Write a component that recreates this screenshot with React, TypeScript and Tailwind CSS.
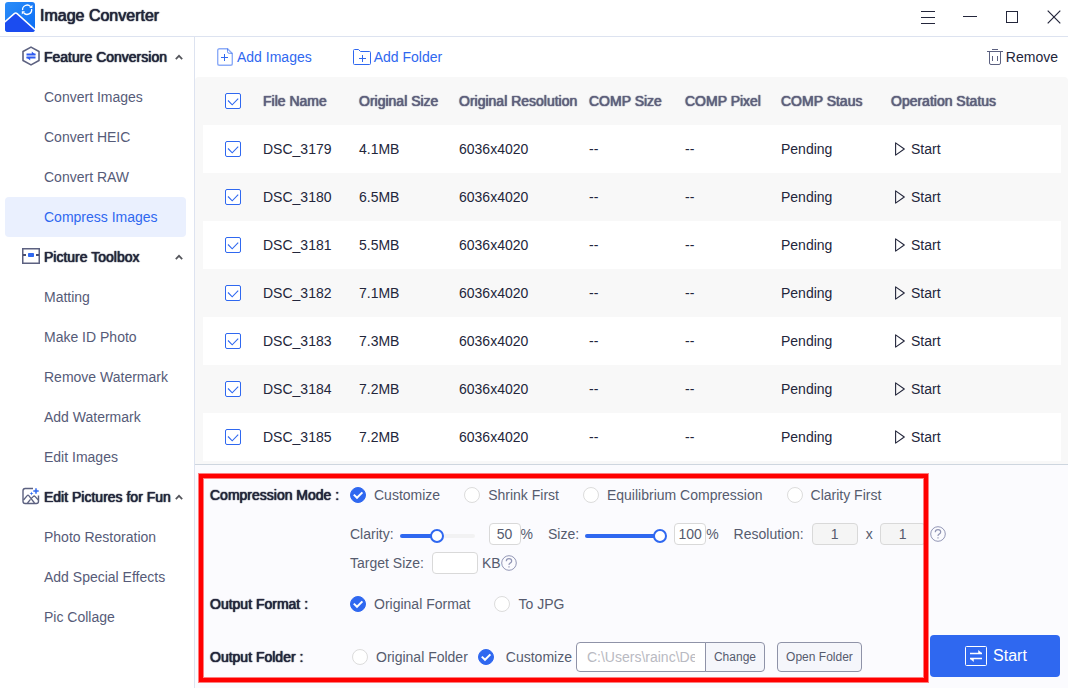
import { useState } from "react";
import type { ReactNode } from "react";

const FAUX_BOLD = "[text-shadow:0_0_1px_currentColor,0_0_1px_currentColor]";

const files = [
  { name: "DSC_3179", size: "4.1MB" },
  { name: "DSC_3180", size: "6.5MB" },
  { name: "DSC_3181", size: "5.5MB" },
  { name: "DSC_3182", size: "7.1MB" },
  { name: "DSC_3183", size: "7.3MB" },
  { name: "DSC_3184", size: "7.2MB" },
  { name: "DSC_3185", size: "7.2MB" },
];

const columns = [
  { label: "File Name", width: "w-[96px]" },
  { label: "Original Size", width: "w-[100px]" },
  { label: "Original Resolution", width: "w-[130px]" },
  { label: "COMP Size", width: "w-[96px]" },
  { label: "COMP Pixel", width: "w-[96px]" },
  { label: "COMP Staus", width: "w-[110px]" },
  { label: "Operation Status", width: "" },
];

function Logo() {
  return (
    <svg width="30" height="30" viewBox="0 0 30 30" aria-hidden="true">
      <defs>
        <linearGradient id="sky" x1="0" y1="0" x2="1" y2="1">
          <stop offset="0" stopColor="#2b8df8" />
          <stop offset="1" stopColor="#0a6cf5" />
        </linearGradient>
        <clipPath id="tile">
          <rect width="30" height="30" rx="3" />
        </clipPath>
      </defs>
      <g clipPath="url(#tile)">
        <rect width="30" height="30" fill="url(#sky)" />
        <path d="M-2 21.5 9.3 11.6q1.4-1.2 2.8 0L32 29.5V33H-2z" fill="#1b4cf0" stroke="#fff" strokeWidth="1.5" />
        <path d="M17.6 8.2a4.6 4.6 0 0 1 8-3.6M26.6 7a4.6 4.6 0 0 1-8 3.8" fill="none" stroke="#fff" strokeWidth="1.3" />
        <path d="M24.2 6h3.2V2.800zM20 9.200h-3.200v3.200z" fill="#fff" />
      </g>
    </svg>
  );
}

function HexIcon() {
  return (
    <svg width="18" height="20" viewBox="0 0 18 20" fill="none" aria-hidden="true">
      <path d="M9 1.1 17 5.5v9L9 18.9 1 14.5v-9z" stroke="#5c6180" strokeWidth="1.6" strokeLinejoin="round" />
      <path d="M4.500 8.500h9M4.500 11.500h9" stroke="#2f5bf0" strokeWidth="1.800" />
      <path d="M9.800 5.400 13.800 9H9.800zM8.200 14.600 4.200 11h4z" fill="#2f5bf0" />
    </svg>
  );
}

function ToolboxIcon() {
  return (
    <svg width="18" height="16" viewBox="0 0 18 16" fill="none" aria-hidden="true">
      <rect x=".75" y=".75" width="16.5" height="14.5" stroke="#5c6180" strokeWidth="1.5" />
      <path d="M1 7h3M14 7h3" stroke="#4a4f70" strokeWidth="2" />
      <rect x="6" y="5" width="6" height="4" rx=".8" fill="#2f68f0" />
    </svg>
  );
}

function PictureIcon() {
  return (
    <svg width="18" height="18" viewBox="0 0 18 18" fill="none" aria-hidden="true">
      <path d="M11 1.5H3.2Q1 1.500 1 3.700V14.300Q1 16.500 3.200 16.500H14.300Q16.500 16.500 16.500 14.300V8.500" stroke="#5c6180" strokeWidth="1.4" />
      <path d="M1.500 13 5.200 8.600q.8-.8 1.600 0L12.500 16M9.200 11.600l2.200-2.200q.8-.7 1.600 0l3.300 3.600M5.500 16l3-3.600" stroke="#5c6180" strokeWidth="1.300" />
      <path d="M14 1l.8 2.200L17 4l-2.200.8L14 7l-.8-2.200L11 4l2.200-.8z" fill="#2f68f0" stroke="#2f68f0" strokeWidth=".5" />
      <path d="M9.500 4.500l.5 1.500 1.500.5-1.500.5-.5 1.500L9 7l-1.500-.5L9 6z" fill="#2f68f0" />
    </svg>
  );
}

function Chevron() {
  return (
    <svg className="ml-auto" width="8" height="6" viewBox="0 0 8 6" fill="none" aria-hidden="true">
      <path d="M.8 5.200 4 1.800 7.200 5.200" stroke="#55565c" strokeWidth="1.700" />
    </svg>
  );
}

const groups: { title: string; icon: ReactNode; items: string[] }[] = [
  { title: "Feature Conversion", icon: <HexIcon />, items: ["Convert Images", "Convert HEIC", "Convert RAW", "Compress Images"] },
  { title: "Picture Toolbox", icon: <ToolboxIcon />, items: ["Matting", "Make ID Photo", "Remove Watermark", "Add Watermark", "Edit Images"] },
  { title: "Edit Pictures for Fun", icon: <PictureIcon />, items: ["Photo Restoration", "Add Special Effects", "Pic Collage"] },
];

function TitleBar() {
  return (
    <header className="flex h-[37px] items-center border-b border-[#dde3f0] pl-[5px]">
      <div className="flex items-center gap-[5px] pb-0.5">
        <Logo />
        <h1 className={`pb-0.5 text-base leading-5 text-[#23263b] ${FAUX_BOLD}`}>Image Converter</h1>
      </div>
      <div className="ml-auto flex gap-3.5">
        <button type="button" aria-label="Menu" className="flex h-7 w-7 items-center justify-center">
          <svg width="14" height="16" viewBox="0 0 14 16" stroke="#23263b" aria-hidden="true">
            <path d="M0 1.500h14M0 7.500h14M0 13.500h14" />
          </svg>
        </button>
        <button type="button" aria-label="Minimize" className="flex h-7 w-7 items-center justify-center">
          <svg width="14" height="16" viewBox="0 0 14 16" stroke="#23263b" aria-hidden="true">
            <path d="M0 6.500h14" />
          </svg>
        </button>
        <button type="button" aria-label="Maximize" className="flex h-7 w-7 items-center justify-center">
          <svg width="14" height="16" viewBox="0 0 14 16" fill="none" stroke="#23263b" aria-hidden="true">
            <rect x="1.500" y="1.500" width="11" height="11" />
          </svg>
        </button>
        <button type="button" aria-label="Close" className="flex h-7 w-7 items-center justify-center">
          <svg width="14" height="16" viewBox="0 0 14 16" stroke="#23263b" strokeWidth="1.200" aria-hidden="true">
            <path d="M.7.700l12.600 12.600M13.300.700.700 13.300" />
          </svg>
        </button>
      </div>
    </header>
  );
}

function Sidebar() {
  return (
    <nav className="w-[195px] shrink-0 border-r border-[#dde3f0] pr-2 pl-[5px]">
      {groups.map((group) => (
        <section key={group.title}>
          <button type="button" className="flex h-10 w-full items-center gap-1 pr-[3px] pl-[17px] text-[#23263b]">
            <span className="pb-0.5">{group.icon}</span>
            <span className={`whitespace-nowrap ${FAUX_BOLD}`}>{group.title}</span>
            <Chevron />
          </button>
          <ul>
            {group.items.map((item) => (
              <li key={item}>
                <a
                  href="#"
                  className={
                    item === "Compress Images"
                      ? "flex h-10 items-center rounded bg-[#eaf0fe] pl-[39px] text-[#2f68f0]"
                      : "flex h-10 items-center pl-[39px] text-[#565b78]"
                  }
                >
                  {item}
                </a>
              </li>
            ))}
          </ul>
        </section>
      ))}
    </nav>
  );
}

function Toolbar() {
  return (
    <div className="flex h-10 items-center pr-2.5 pl-[22px]">
      <button type="button" className="flex items-center gap-1 text-[#2f68f0]">
        <svg width="16" height="18" viewBox="0 0 16 18" fill="none" stroke="#2f68f0" aria-hidden="true">
          <path d="M10.500.7H2.500Q.7.700.7 2.500v13q0 1.800 1.800 1.800h11q1.800 0 1.800-1.800v-10z" strokeWidth="1.400" opacity=".55" />
          <path d="M10.500.7v3q0 1.600 1.600 1.600h3.200" opacity=".7" />
          <path d="M4 9.500h7M7.500 6v7" />
        </svg>
        Add Images
      </button>
      <button type="button" className="ml-[41px] flex items-center gap-[3px] text-[#2f68f0]">
        <svg width="18" height="16" viewBox="0 0 18 16" fill="none" stroke="#2f68f0" aria-hidden="true">
          <path d="M.5 14V1.500Q.500.500 1.500.500H5.500L7.500 2.500h9q1 0 1 1V14.500q0 1-1 1h-15q-1 0-1-1z" />
          <path d="M6 9.500h7M9.500 6v7" />
        </svg>
        Add Folder
      </button>
      <button type="button" className="ml-auto flex items-center gap-[3px] text-[#23263b]">
        <svg width="16" height="16" viewBox="0 0 16 16" fill="none" stroke="#5c6180" aria-hidden="true">
          <path d="M0 2.500h16M5 .5h6M2.500 2.500V14q0 1.500 1.500 1.500h8q1.500 0 1.500-1.500V2.500M5.500 7v5M10.500 7v5" />
        </svg>
        Remove
      </button>
    </div>
  );
}

function TickBox({ label }: { label: string }) {
  return (
    <span className="relative block h-4 w-4">
      <input
        type="checkbox"
        defaultChecked
        aria-label={label}
        className="peer block h-4 w-4 appearance-none rounded-xs border border-[#2f68f0] bg-white"
      />
      <svg className="pointer-events-none absolute inset-0 hidden peer-checked:block" width="16" height="16" viewBox="0 0 16 16" fill="none" aria-hidden="true">
        <path d="M3 7.500 7.200 11.800 13.200 5.600" stroke="#2f68f0" strokeWidth="1.100" />
      </svg>
    </span>
  );
}

function FileTable() {
  return (
    <div className="rounded-t bg-[#f8f8f8] pr-[7px] pb-[3px] pl-2">
      <table className="w-full table-fixed border-collapse text-left">
        <thead>
          <tr className="h-12">
            <th className="w-[50px] pl-[22px]">
              <TickBox label="Select all" />
            </th>
            {columns.map((c) => (
              <th key={c.label} className={`pl-2.5 font-normal whitespace-nowrap text-[#5e607c] ${FAUX_BOLD} ${c.width}`}>
                {c.label}
              </th>
            ))}
          </tr>
        </thead>
        <tbody className="text-[#23263b]">
          {files.map((f) => (
            <tr key={f.name} className="h-12 odd:bg-white">
              <td className="pl-[22px]">
                <TickBox label={f.name} />
              </td>
              <td className="pl-2.5">{f.name}</td>
              <td className="pl-2.5">{f.size}</td>
              <td className="pl-2.5">6036x4020</td>
              <td className="pl-2.5">--</td>
              <td className="pl-2.5">--</td>
              <td className="pl-2.5">Pending</td>
              <td className="pl-3.5">
                <button type="button" className="flex items-center gap-1.5">
                  <svg width="10" height="14" viewBox="0 0 10 14" fill="none" aria-hidden="true">
                    <path d="M.6.900v12.200L9.300 7z" stroke="#23263b" strokeWidth="1.100" strokeLinejoin="round" />
                  </svg>
                  Start
                </button>
              </td>
            </tr>
          ))}
        </tbody>
      </table>
    </div>
  );
}

function Radio({ name, label, checked, wide }: { name: string; label: string; checked?: boolean; wide?: boolean }) {
  return (
    <label className={wide ? "flex items-center gap-3 whitespace-nowrap" : "flex items-center gap-2 whitespace-nowrap"}>
      <span className="relative block h-4 w-4">
        <input
          type="radio"
          name={name}
          defaultChecked={checked}
          className="peer block h-4 w-4 appearance-none rounded-full border border-[#dcdcdc] bg-white checked:border-[#2f68f0] checked:bg-[#2f68f0]"
        />
        <svg className="pointer-events-none absolute inset-0 hidden peer-checked:block" width="16" height="16" viewBox="0 0 16 16" fill="none" aria-hidden="true">
          <path d="M3.800 7.600 7 10.800 12.400 5.400" stroke="#fff" strokeWidth="2" />
        </svg>
      </span>
      {label}
    </label>
  );
}

function PercentSlider({ id, label, initial }: { id: string; label: string; initial: number }) {
  const [value, setValue] = useState(initial);
  return (
    <div className="flex items-center">
      <label htmlFor={id}>{label}</label>
      <div className="relative mt-[3px] mr-[7px] -ml-px h-3.5 w-[89px]">
        <div className="absolute inset-x-[7px] top-[5px] h-1 rounded-full bg-[#f2f2f3]">
          <div className="h-1 rounded-full bg-[#2f68f0]" style={{ width: `${value}%` }} />
        </div>
        <input
          id={id}
          type="range"
          min={0}
          max={100}
          value={value}
          onChange={(e) => setValue(Number(e.target.value))}
          className="absolute inset-0 h-3.5 w-full appearance-none bg-transparent [&::-webkit-slider-thumb]:h-3.5 [&::-webkit-slider-thumb]:w-3.5 [&::-webkit-slider-thumb]:appearance-none [&::-webkit-slider-thumb]:rounded-full [&::-webkit-slider-thumb]:border-2 [&::-webkit-slider-thumb]:border-[#2f68f0] [&::-webkit-slider-thumb]:bg-white"
        />
      </div>
      <input
        type="text"
        aria-label={`${label} percent`}
        value={value}
        onChange={(e) => setValue(Number(e.target.value) || 0)}
        className="h-[22px] w-8 rounded border border-[#d9d9d9] bg-white text-center"
      />
      <span>%</span>
    </div>
  );
}

function Help({ label }: { label: string }) {
  return (
    <button type="button" aria-label={label}>
      <svg width="16" height="16" viewBox="0 0 16 16" fill="none" stroke="#9296b5" aria-hidden="true">
        <circle cx="8" cy="8" r="7.300" />
        <path d="M5.300 6.300Q5.300 3.700 8 3.700t2.700 2.400Q10.700 7.300 9.200 8.100 8 8.800 8 10" strokeWidth="1.200" />
        <path d="M8 11.200v1.300" strokeWidth="1.200" />
      </svg>
    </button>
  );
}

function RowTitle({ children }: { children: ReactNode }) {
  return <h2 className={`w-[140px] shrink-0 whitespace-nowrap text-[#23263b] ${FAUX_BOLD}`}>{children}</h2>;
}

function Settings() {
  return (
    <form className="relative flex-1 border-t border-[#ced6df] bg-[#fbfbfe] pt-5 pr-2 pb-[9px] pl-[15px] text-[#565b6e]">
      <div className="flex h-5 items-center">
        <RowTitle>Compression Mode :</RowTitle>
        <div className="flex gap-6">
          <Radio name="mode" label="Customize" checked />
          <Radio name="mode" label="Shrink First" />
          <Radio name="mode" label="Equilibrium Compression" />
          <Radio name="mode" label="Clarity First" />
        </div>
      </div>

      <div className="mt-[18px] flex h-[22px] items-center pl-[140px]">
        <PercentSlider id="clarity" label="Clarity:" initial={50} />
        <div className="ml-[15px]">
          <PercentSlider id="size" label="Size:" initial={100} />
        </div>
        <label htmlFor="res-w" className="mr-2 ml-[15px]">Resolution:</label>
        <input id="res-w" type="text" defaultValue="1" disabled className="h-[22px] w-[46px] rounded border border-[#d9d9d9] bg-[#f5f5f5] text-center" />
        <span className="mr-[7px] ml-2">x</span>
        <input aria-label="Resolution height" type="text" defaultValue="1" disabled className="mr-1 h-[22px] w-[46px] rounded border border-[#d9d9d9] bg-[#f5f5f5] text-center" />
        <Help label="Resolution help" />
      </div>

      <div className="mt-[7px] flex h-[22px] items-center pl-[140px]">
        <label htmlFor="target" className="mr-2">Target Size:</label>
        <input id="target" type="text" className="mr-1 h-[22px] w-[46px] rounded border border-[#d9d9d9] bg-white px-1" />
        <span>KB</span>
        <Help label="Target size help" />
      </div>

      <div className="mt-5 flex h-5 items-center">
        <RowTitle>Output Format :</RowTitle>
        <div className="flex gap-6">
          <Radio name="format" label="Original Format" checked />
          <Radio name="format" label="To JPG" />
        </div>
      </div>

      <div className="mt-[21px] flex h-11 items-center">
        <RowTitle>Output Folder :</RowTitle>
        <div className="flex items-center gap-2.5 pl-0.5">
          <Radio name="folder" label="Original Folder" />
          <Radio name="folder" label="Customize" checked wide />
        </div>
        <div className="ml-1 flex">
          <input
            type="text"
            aria-label="Output path"
            defaultValue="C:\Users\rainc\De"
            className="h-[30px] w-[130px] rounded-l border border-[#8f93a8] bg-white px-2.5 text-[#b9bac2]"
          />
          <button type="button" className="-ml-px h-[30px] w-[60px] rounded-r border border-[#8f93a8] bg-[#f5f6fb] text-xs">
            Change
          </button>
        </div>
        <button type="button" className="ml-3 h-[30px] w-[85px] rounded border border-[#8f93a8] bg-[#f5f6fb] text-xs">
          Open Folder
        </button>
        <button type="button" className="ml-auto flex h-[42px] w-[130px] items-center justify-center gap-1.5 self-start rounded bg-[#2f68f0] pl-0.5 text-base text-white">
          <svg width="22" height="20" viewBox="0 0 22 20" fill="none" stroke="#fff" aria-hidden="true">
            <rect x=".5" y=".5" width="21" height="19" rx="1" />
            <path d="M5 7.500h12M5 12.500h12" strokeWidth="1.400" />
            <path d="M17 7.500 13.500 4.500v3zM5 12.500 8.500 15.500v-3z" fill="#fff" strokeWidth=".5" />
          </svg>
          Start
        </button>
      </div>

      <div className="pointer-events-none absolute top-[9px] right-[140px] bottom-[6px] left-1 border-4 border-[#ff0000] shadow-[0_0_0_1px_#ff000080,inset_0_0_0_1px_#ff000080]" />
    </form>
  );
}

export default function App() {
  return (
    <div className="flex min-h-screen flex-col bg-white font-['Liberation_Sans',Arial,sans-serif] text-sm">
      <TitleBar />
      <div className="flex flex-1">
        <Sidebar />
        <main className="flex min-w-0 flex-1 flex-col">
          <Toolbar />
          <FileTable />
          <Settings />
        </main>
      </div>
    </div>
  );
}
